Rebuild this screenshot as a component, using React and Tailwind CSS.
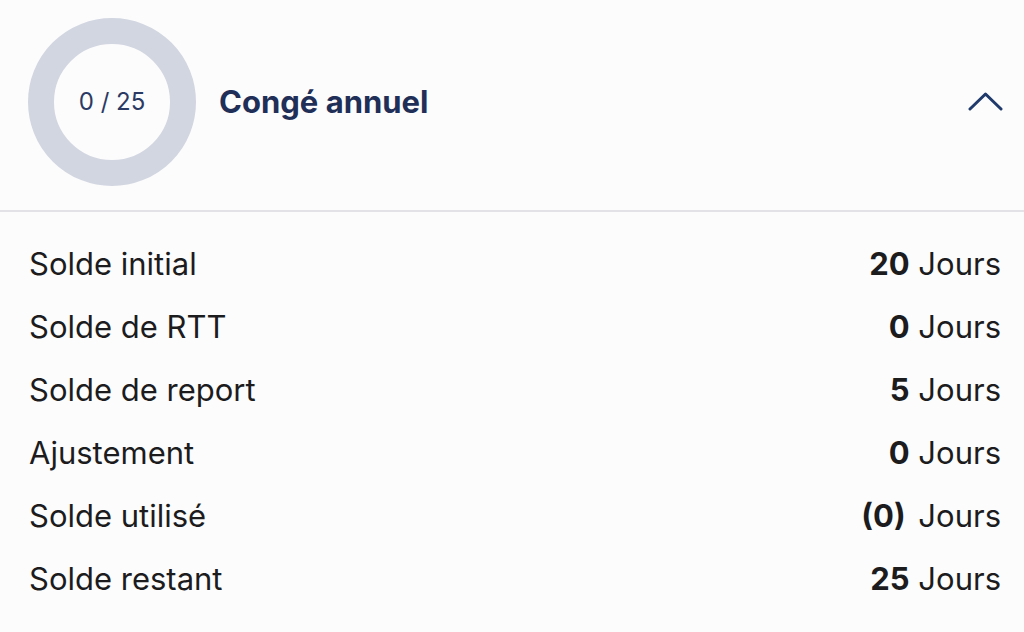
const rows = [
  { label: "Solde initial", value: "20" },
  { label: "Solde de RTT", value: "0" },
  { label: "Solde de report", value: "5" },
  { label: "Ajustement", value: "0" },
  { label: "Solde utilisé", value: "(0)", gap: true },
  { label: "Solde restant", value: "25" },
];

function Ring({ used, total }) {
  return (
    <div className="relative w-[168px] h-[168px] shrink-0">
      <svg width="168" height="168" viewBox="0 0 168 168">
        <circle cx="84" cy="84" r="71" fill="none" stroke="#d2d6e0" strokeWidth="26" />
      </svg>
      <div className="absolute inset-0 flex items-center justify-center text-[24px] text-[#2b3a63]">
        {used} / {total}
      </div>
    </div>
  );
}

export default function App() {
  return (
    <div className="min-h-screen bg-[#fcfcfd] font-['Inter',sans-serif] text-[#1c1c1e]">
      <div className="flex items-center h-[212px] pl-[28px] pr-[21px] pb-[6px] border-b-2 border-[#e2e2e7]">
        <Ring used={0} total={25} />
        <h1 className="ml-[23px] text-[31px] font-bold text-[#1f2f57]">Congé annuel</h1>
        <svg className="ml-auto" width="35" height="20" viewBox="0 0 35 20" fill="none">
          <path d="M2 17L17.5 2L33 17" stroke="#1f3a6b" strokeWidth="3" strokeLinecap="round" strokeLinejoin="round" />
        </svg>
      </div>
      <div className="flex flex-col pt-[21px] px-[23px] pl-[29px]">
        {rows.map((r) => (
          <div key={r.label} className="flex items-center justify-between h-[63px] text-[31px]">
            <span>{r.label}</span>
            <span>
              <span className="font-bold">{r.value}</span>{" "}
              <span className={r.gap ? "ml-[4px]" : ""}>Jours</span>
            </span>
          </div>
        ))}
      </div>
    </div>
  );
}
